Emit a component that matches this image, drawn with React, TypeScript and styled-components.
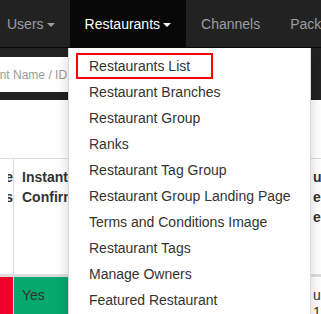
import styled, { createGlobalStyle } from "styled-components";

const GlobalStyle = createGlobalStyle`
  html, body {
    margin: 0;
    padding: 0;
    background: #fff;
    font-family: "Liberation Sans", Arial, Helvetica, sans-serif;
    font-size: 14px;
    color: #333;
    overflow: hidden;
  }
`;

const Page = styled.div`
  position: relative;
  width: 321px;
  height: 314px;
  overflow: hidden;
`;

/* navbar */
const Navbar = styled.nav`
  display: flex;
  height: 47px;
  background: #222;
  border-bottom: 1px solid #080808;
  padding-left: 7px;
  box-sizing: content-box;
`;

const NavLink = styled.a<{ $active?: boolean; $first?: boolean }>`
  display: flex;
  align-items: center;
  flex-shrink: 0;
  padding: 0 15px 0 ${(p) => (p.$first ? "0" : "15px")};
  line-height: 20px;
  white-space: nowrap;
  color: ${(p) => (p.$active ? "#fff" : "#9d9d9d")};
  background: ${(p) => (p.$active ? "#080808" : "transparent")};
  text-decoration: none;
`;

const Caret = styled.span`
  display: inline-block;
  width: 0;
  height: 0;
  margin-left: 3px;
  margin-top: 2px;
  border-top: 4px solid currentColor;
  border-left: 4px solid transparent;
  border-right: 4px solid transparent;
`;

/* search band */
const SearchBand = styled.div`
  background: #222;
  padding: 9px 0 8px;
`;

const SearchInput = styled.input`
  display: block;
  width: 360px;
  height: 35px;
  box-sizing: border-box;
  margin-left: -61px;
  padding: 0 12px;
  border: none;
  border-radius: 4px;
  font-family: inherit;
  font-size: 12px;
  outline: none;
  &::placeholder {
    color: #999;
  }
`;

const Spacer = styled.div`
  height: 58px;
`;

/* table */
const Row = styled.div<{ $head?: boolean }>`
  display: grid;
  grid-template-columns: 13px 291px 1fr;
  height: ${(p) => (p.$head ? "115px" : "40px")};
  border-top: 1px solid #ddd;
  border-bottom: ${(p) => (p.$head ? "2px solid #ddd" : "none")};
`;

const Cell = styled.div<{ $head?: boolean; $bg?: string; $right?: boolean }>`
  box-sizing: border-box;
  overflow: hidden;
  border-left: 1px solid #ddd;
  &:first-child {
    border-left: none;
  }
  padding: ${(p) => (p.$head ? "8px" : "10px 8px 0")};
  padding-right: ${(p) => (p.$right ? "0" : "8px")};
  display: flex;
  flex-direction: column;
  align-items: ${(p) => (p.$right ? "flex-end" : "flex-start")};
  background: ${(p) => p.$bg || "transparent"};
  font-weight: ${(p) => (p.$head ? 700 : 400)};
  line-height: 20px;
  white-space: nowrap;
  color: #333;
`;

const ClipRight = styled.div`
  width: 5px;
  overflow: hidden;
  display: flex;
  flex-direction: column;
  align-items: flex-end;
`;

const RowText = styled.span`
  font-size: 14px;
  line-height: 17px;
  color: #333;
`;

/* dropdown */
const Dropdown = styled.ul`
  position: absolute;
  top: 48px;
  left: 68px;
  width: 243px;
  height: 290px;
  box-sizing: border-box;
  margin: 0;
  padding: 5px 0;
  list-style: none;
  background: #fff;
  border: 1px solid rgba(0, 0, 0, 0.15);
  border-top: none;
  box-shadow: 0 6px 12px rgba(0, 0, 0, 0.175);
`;

const Item = styled.li<{ $marked?: boolean }>`
  position: relative;
  padding: 3px 20px;
  line-height: 20px;
  color: #333;
  white-space: nowrap;
  &::after {
    content: "";
    display: ${(p) => (p.$marked ? "block" : "none")};
    position: absolute;
    left: 7px;
    top: 0;
    width: 137px;
    height: 26px;
    box-sizing: border-box;
    border: 2px solid #f00;
  }
`;

const items = [
  "Restaurants List",
  "Restaurant Branches",
  "Restaurant Group",
  "Ranks",
  "Restaurant Tag Group",
  "Restaurant Group Landing Page",
  "Terms and Conditions Image",
  "Restaurant Tags",
  "Manage Owners",
  "Featured Restaurant",
];

export default function App() {
  return (
    <Page>
      <GlobalStyle />
      <Navbar>
        <NavLink $first>
          Users
          <Caret />
        </NavLink>
        <NavLink $active>
          Restaurants
          <Caret />
        </NavLink>
        <NavLink>Channels</NavLink>
        <NavLink>Packages</NavLink>
      </Navbar>
      <SearchBand>
        <SearchInput placeholder="Restaurant Name / ID" />
      </SearchBand>
      <Spacer />
      <Row $head>
        <Cell $head $right>
          <ClipRight>
            <span>Active</span>
            <span>Status</span>
          </ClipRight>
        </Cell>
        <Cell $head>
          <span>Instant</span>
          <span>Confirmation</span>
        </Cell>
        <Cell $head>
          <span>ur</span>
          <span>er</span>
          <span>e</span>
        </Cell>
      </Row>
      <Row>
        <Cell $bg="#f0002a" />
        <Cell $bg="#05a86e">
          <RowText>Yes</RowText>
        </Cell>
        <Cell>
          <RowText>ur</RowText>
          <RowText>11</RowText>
        </Cell>
      </Row>
      <Dropdown>
        {items.map((label, i) => (
          <Item key={label} $marked={i === 0}>
            {label}
          </Item>
        ))}
      </Dropdown>
    </Page>
  );
}
